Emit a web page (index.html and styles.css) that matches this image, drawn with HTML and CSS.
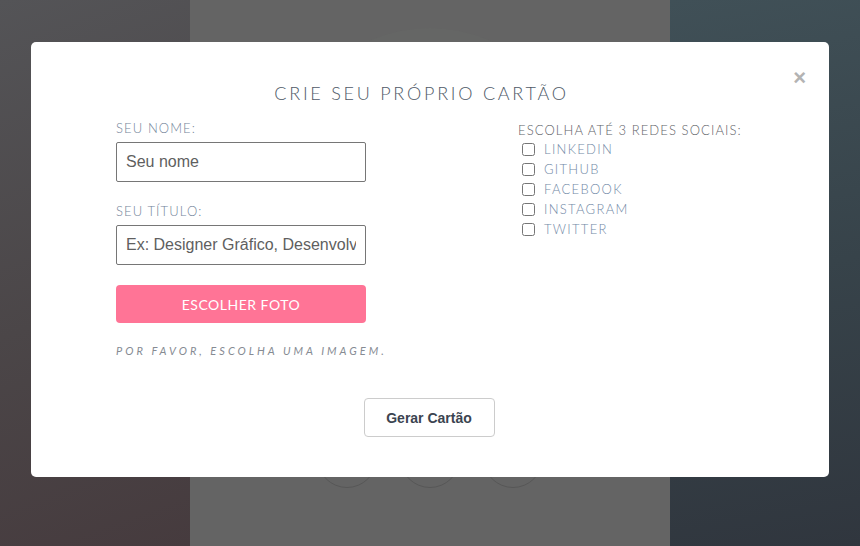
FILE: index.html
```html
<!DOCTYPE html>
<html lang="pt-BR">
<head>
<meta charset="utf-8">
<title>Crie seu próprio cartão</title>
<link rel="stylesheet" href="styles.css">
</head>
<body>
<div class="page">
  <div class="side side-left"></div>
  <div class="center">
    <div class="halo"></div>
    <div class="socials">
      <span class="circle"></span>
      <span class="circle"></span>
      <span class="circle"></span>
    </div>
  </div>
  <div class="side side-right"></div>
</div>

<div class="modal">
  <button class="close" type="button">&times;</button>
  <h1 class="title">CRIE SEU PRÓPRIO CARTÃO</h1>
  <div class="columns">
    <div class="col-left">
      <label class="label" for="nome">SEU NOME:</label>
      <input class="field" id="nome" type="text" placeholder="Seu nome">
      <label class="label label-gap" for="titulo">SEU TÍTULO:</label>
      <input class="field" id="titulo" type="text" placeholder="Ex: Designer Gráfico, Desenvolvedor">
      <button class="photo" type="button">ESCOLHER FOTO</button>
      <p class="note">POR FAVOR, ESCOLHA UMA IMAGEM.</p>
    </div>
    <div class="col-right">
      <p class="social-label">ESCOLHA ATÉ 3 REDES SOCIAIS:</p>
      <label class="check"><input type="checkbox"><span>LINKEDIN</span></label>
      <label class="check"><input type="checkbox"><span>GITHUB</span></label>
      <label class="check"><input type="checkbox"><span>FACEBOOK</span></label>
      <label class="check"><input type="checkbox"><span>INSTAGRAM</span></label>
      <label class="check"><input type="checkbox"><span>TWITTER</span></label>
    </div>
  </div>
  <div class="actions">
    <button class="generate" type="button">Gerar Cartão</button>
  </div>
</div>
</body>
</html>
```

FILE: styles.css
```css
html, body {
  margin: 0;
  padding: 0;
  width: 860px;
  height: 546px;
  overflow: hidden;
}

body {
  font-family: Lato, "Open Sans", sans-serif;
  position: relative;
}

.page {
  display: flex;
  height: 546px;
}

.side {
  width: 190px;
  flex: none;
}

.side-left {
  background: linear-gradient(160deg, #545457 0%, #4b4648 55%, #463b3e 100%);
}

.side-right {
  background: linear-gradient(170deg, #405057 0%, #37434a 50%, #30363e 100%);
}

.center {
  flex: 1;
  background: #646464;
  display: flex;
  flex-direction: column;
  align-items: center;
  overflow: hidden;
}

.halo {
  width: 300px;
  height: 300px;
  border-radius: 50%;
  background: #656665;
  margin-top: 28px;
  flex: none;
}

.socials {
  display: flex;
  gap: 23px;
  margin-top: 100px;
}

.circle {
  width: 58px;
  height: 58px;
  border-radius: 50%;
  border: 1px solid #575757;
}

.modal {
  position: absolute;
  left: 31px;
  top: 42px;
  width: 798px;
  height: 435px;
  background: #fff;
  border-radius: 5px;
  box-sizing: border-box;
  padding: 39px 85px 0 85px;
}

.close {
  position: absolute;
  right: 23px;
  top: 24px;
  border: 0;
  background: none;
  padding: 0;
  font-family: "Liberation Sans", Arial, sans-serif;
  font-size: 22px;
  font-weight: bold;
  line-height: 24px;
  color: #b3b3b3;
}

.title {
  margin: 0;
  text-align: center;
  font-size: 18px;
  font-weight: 300;
  line-height: 24px;
  letter-spacing: 2.75px;
  color: #4f5a68;
  padding-right: 17px;
}

.columns {
  display: flex;
  margin-top: 15px;
}

.col-left {
  width: 250px;
  display: flex;
  flex-direction: column;
}

.col-right {
  margin-left: 152px;
  padding-top: 2px;
  display: flex;
  flex-direction: column;
}

.label {
  display: block;
  font-size: 13px;
  font-weight: 300;
  line-height: 16px;
  letter-spacing: 1.1px;
  color: #73849a;
  margin-bottom: 6px;
}

.label-gap {
  margin-top: 21px;
}

.field {
  width: 250px;
  height: 40px;
  box-sizing: border-box;
  border: 1px solid #767676;
  border-radius: 2px;
  padding: 0 9px;
  font-family: "Liberation Sans", Arial, sans-serif;
  font-size: 16px;
  color: #333;
  margin: 0;
}

.field::placeholder {
  color: #5f5f5f;
  opacity: 1;
}

.photo {
  margin-top: 20px;
  width: 250px;
  height: 38px;
  border: 0;
  border-radius: 4px;
  background: #ff7496;
  color: #fff;
  font-family: Lato, "Open Sans", sans-serif;
  font-size: 14px;
  font-weight: 400;
  letter-spacing: 0.5px;
  padding: 0;
}

.note {
  margin: 21px 0 0 0;
  font-size: 11px;
  font-style: italic;
  font-weight: 400;
  line-height: 14px;
  letter-spacing: 3px;
  color: #868b93;
  white-space: nowrap;
}

.social-label {
  margin: 0 0 1px 0;
  font-size: 13px;
  font-weight: 300;
  line-height: 16px;
  letter-spacing: 1.1px;
  color: #5f6368;
  white-space: nowrap;
}

.check {
  display: flex;
  align-items: center;
  height: 20px;
  font-size: 13px;
  font-weight: 300;
  letter-spacing: 1.3px;
  color: #7189a6;
}

.check input {
  margin: 0 9px 0 4px;
  width: 13px;
  height: 13px;
}

.actions {
  display: flex;
  justify-content: center;
  margin-top: 40px;
}

.generate {
  width: 131px;
  height: 39px;
  box-sizing: border-box;
  border: 1px solid #cccccc;
  border-radius: 4px;
  background: #fff;
  font-family: "Liberation Sans", Arial, sans-serif;
  font-size: 14px;
  font-weight: bold;
  color: #3b4450;
  padding: 0;
  margin-right: 2px;
}
```
